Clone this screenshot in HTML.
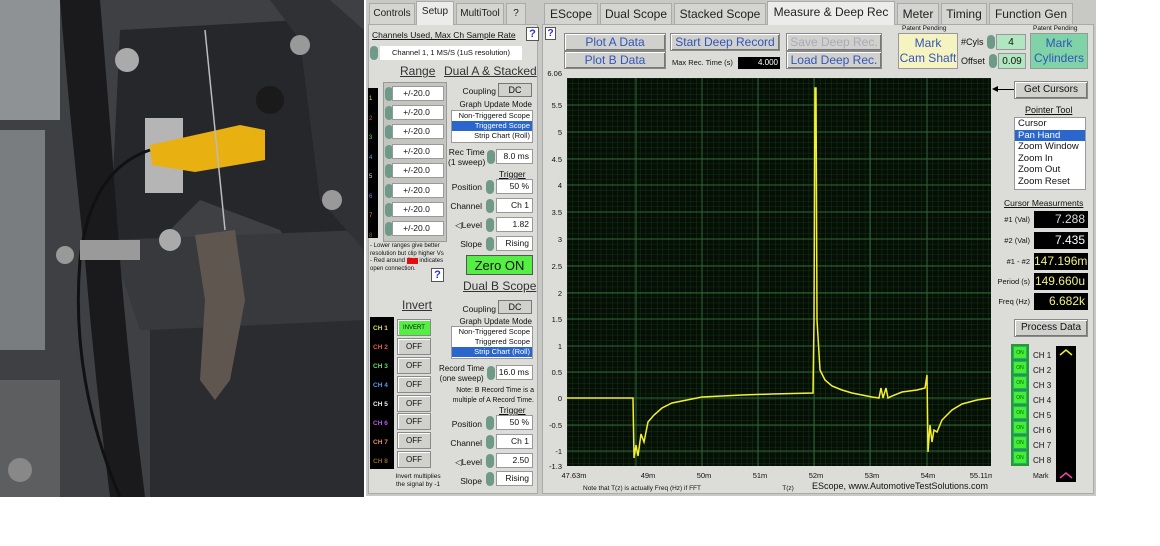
<!DOCTYPE html>
<html><head><meta charset="utf-8"><style>
*{margin:0;padding:0;box-sizing:border-box}
body{width:1160px;height:546px;background:#fff;position:relative;overflow:hidden;font-family:"Liberation Sans",sans-serif;font-size:9px;color:#111}
.a{position:absolute;white-space:nowrap}
.tab{position:absolute;top:3px;height:21px;background:#d4d4d0;border:1px solid #aaa;border-bottom:none;font-size:12px;color:#222;text-align:center;line-height:20px}
.tab.s{background:#ececea;top:1px;height:24px}
.box{position:absolute;background:#fff;border:1px solid #999;text-align:right;padding-right:3px;font-size:8.5px;line-height:13px;height:15px;white-space:nowrap;overflow:hidden}
.sp{position:absolute;width:8px;height:14px;border-radius:4px;background:#6f9a8a}
.btn{position:absolute;background:#d0d0cc;border:1px solid #888;box-shadow:inset 1px 1px #fff,inset -1px -1px #777;text-align:center;color:#3355bb;font-size:12px;white-space:nowrap}
.r{text-align:right}
.u{text-decoration:underline}
.meas{position:absolute;left:1034px;width:54px;height:17px;background:#000;color:#ddd;font-size:12px;text-align:right;padding-right:3px;line-height:17px;white-space:nowrap;overflow:hidden}
.on{position:absolute;left:1013px;width:14px;height:13px;background:#44ee33;border:1px solid #2a8;font-size:5px;text-align:center;line-height:12px;color:#060}
.off{position:absolute;left:397px;width:34px;height:17px;background:#d0d0cc;border:1px solid #888;box-shadow:inset 1px 1px #fff;text-align:center;font-size:8px;line-height:16px}
</style></head><body>
<!-- photo -->
<svg class="a" style="left:0;top:0" width="364" height="497">
<rect width="364" height="497" fill="#3e4044"/>
<rect x="0" y="0" width="60" height="120" fill="#8f9294"/>
<rect x="0" y="130" width="45" height="220" fill="#7a7d80"/>
<rect x="0" y="380" width="60" height="117" fill="#5c5e60"/>
<path d="M120 30 L300 20 L364 60 L364 300 L300 260 L280 230 L200 200 L140 260 L110 240 Z" fill="#26272a"/>
<path d="M110 240 L364 230 L364 330 L140 330Z" fill="#38393d"/>
<path d="M150 330 L364 320 L364 497 L150 497Z" fill="#2b2c2f"/>
<path d="M60 0 Q70 120 85 260 Q95 380 110 497 L145 497 Q130 380 120 260 Q110 120 100 0Z" fill="#1a1a1c"/>
<path d="M270 0 L330 0 L364 30 L364 250 L320 200 L300 40Z" fill="#303134"/>
<rect x="145" y="118" width="38" height="75" fill="#b5b5b5"/>
<path d="M150 145 L240 125 L265 130 L265 160 L195 172 L152 165Z" fill="#e8b010"/>
<path d="M150 150 Q90 170 80 260 Q70 380 120 497" stroke="#111" stroke-width="3" fill="none"/>
<path d="M205 30 L225 230" stroke="#bbb" stroke-width="1.5"/>
<path d="M195 235 L235 230 L245 300 L230 380 L215 400 L200 380 L205 300Z" fill="#5f5650"/>
<circle cx="127" cy="60" r="12" fill="#aaa"/><circle cx="300" cy="45" r="10" fill="#999"/>
<circle cx="170" cy="240" r="11" fill="#aaa"/><circle cx="332" cy="200" r="10" fill="#999"/>
<circle cx="65" cy="255" r="9" fill="#999"/><circle cx="20" cy="470" r="12" fill="#888"/>
<rect x="80" y="240" width="60" height="20" fill="#9a9a9a"/>
<circle cx="270" cy="100" r="14" fill="#1a1a1a"/>
</svg>
<!-- app bg -->
<div class="a" style="left:366px;top:0;width:730px;height:496px;background:#c8c8c4"></div>
<div class="a" style="left:368px;top:24px;width:170px;height:470px;background:#dcdcd8;border:1px solid #aaa"></div>
<div class="a" style="left:542px;top:24px;width:552px;height:470px;background:#dcdcd8;border:1px solid #aaa"></div>
<div class="tab" style="left:369px;width:46px;font-size:10px">Controls</div>
<div class="tab s" style="left:416px;width:38px;font-size:10px">Setup</div>
<div class="tab" style="left:456px;width:48px;font-size:10px">MultiTool</div>
<div class="tab" style="left:506px;width:20px;font-size:10px">?</div>
<div class="tab" style="left:544px;width:54px">EScope</div>
<div class="tab" style="left:600px;width:72px">Dual Scope</div>
<div class="tab" style="left:674px;width:92px">Stacked Scope</div>
<div class="tab s" style="left:767px;width:128px">Measure &amp; Deep Rec</div>
<div class="tab" style="left:897px;width:42px">Meter</div>
<div class="tab" style="left:941px;width:46px">Timing</div>
<div class="tab" style="left:989px;width:84px">Function Gen</div>
<!-- setup panel -->
<div class="a u" style="left:372px;top:30px;font-size:8.5px">Channels Used, Max Ch Sample Rate</div>
<div class="a" style="left:526px;top:27px;width:13px;height:14px;background:#fff;border:1px solid #555;color:#23c;font-weight:bold;text-align:center;font-size:11px">?</div>
<div class="sp" style="left:370px;top:46px"></div>
<div class="a" style="left:380px;top:46px;width:142px;height:14px;background:#fff;text-align:center;font-size:7.5px;line-height:14px">Channel 1, 1 MS/S (1uS resolution)</div>
<div class="a u" style="left:400px;top:64px;font-size:12px;color:#333">Range</div>
<div class="a u" style="left:444px;top:64px;font-size:12px;color:#333">Dual A &amp; Stacked</div>
<div class="a" style="left:368px;top:88px;width:10px;height:150px;background:#000"></div>
<div class="a" style="left:383px;top:82px;width:64px;height:160px;background:#c4c4c0;border:1px solid #999"></div>
<div class="a" style="left:369px;top:90px;font-size:6px;line-height:19.5px;color:#ddd"><span style="color:#dd5">1</span><br><span style="color:#d55">2</span><br><span style="color:#5d5">3</span><br><span style="color:#59f">4</span><br>5<br><span style="color:#a6f">6</span><br><span style="color:#d84">7</span><br><span style="color:#863">8</span></div>
<div class="a r" style="left:440px;top:86px;width:56px;font-size:8.5px">Coupling</div>
<div class="a" style="left:498px;top:83px;width:34px;height:14px;background:#d0d0cc;border:1px solid #777;text-align:center;font-size:9px;line-height:13px">DC</div>
<div class="a r" style="left:440px;top:100px;width:92px;font-size:8px">Graph Update Mode</div>
<div class="a" style="left:451px;top:110px;width:82px;height:33px;background:#fff;border:1px solid #999;font-size:7.5px;line-height:10px;text-align:right">
<div style="padding-right:2px">Non-Triggered Scope</div><div style="background:#2a66cc;color:#fff;padding-right:2px">Triggered Scope</div><div style="padding-right:2px">Strip Chart (Roll)</div></div>
<div class="a" style="left:448px;top:147px;font-size:8.5px;text-align:center;line-height:10px">Rec Time<br>(1 sweep)</div>
<div class="sp" style="left:487px;top:150px"></div>
<div class="box" style="left:496px;top:149px;width:37px">8.0 ms</div>
<div class="a u" style="left:499px;top:169px;font-size:8.5px">Trigger</div>
<div class="a r" style="left:440px;top:182px;width:42px;font-size:8.5px">Position</div><div class="sp" style="left:486px;top:180px"></div><div class="box" style="left:496px;top:179px;width:37px">50 %</div>
<div class="a r" style="left:440px;top:201px;width:42px;font-size:8.5px">Channel</div><div class="sp" style="left:486px;top:199px"></div><div class="box" style="left:496px;top:198px;width:37px">Ch 1</div>
<div class="a r" style="left:440px;top:220px;width:42px;font-size:8.5px">◁Level</div><div class="sp" style="left:486px;top:218px"></div><div class="box" style="left:496px;top:217px;width:37px">1.82</div>
<div class="a r" style="left:440px;top:239px;width:42px;font-size:8.5px">Slope</div><div class="sp" style="left:486px;top:237px"></div><div class="box" style="left:496px;top:236px;width:37px">Rising</div>
<div class="a" style="left:370px;top:243px;font-size:6px;line-height:7.5px;width:82px;white-space:normal">- Lower ranges give better resolution but clip higher Vs<br>- Red around <span style="background:#d11;color:#d11">Ch#</span> indicates open connection.</div>
<div class="a" style="left:431px;top:268px;width:13px;height:14px;background:#fff;border:1px solid #555;color:#23c;font-weight:bold;text-align:center;font-size:11px">?</div>
<div class="a" style="left:466px;top:255px;width:67px;height:20px;background:#55ee44;border:1px solid #555;text-align:center;font-size:13px;line-height:19px">Zero ON</div>
<div class="a u" style="left:463px;top:279px;font-size:12px;color:#333">Dual B Scope</div>
<div class="a u" style="left:402px;top:298px;font-size:12px;color:#333">Invert</div>
<div class="a" style="left:370px;top:317px;width:24px;height:152px;background:#000;font-size:6.5px;font-weight:bold;line-height:19px;padding:2px 0 0 3px"><span style="color:#dd5">CH 1</span><br><span style="color:#e55">CH 2</span><br><span style="color:#6d6">CH 3</span><br><span style="color:#59e">CH 4</span><br><span style="color:#eee">CH 5</span><br><span style="color:#b5e">CH 6</span><br><span style="color:#e85">CH 7</span><br><span style="color:#862">CH 8</span></div>
<div class="off" style="top:319px;background:#55ee44;font-size:6px">INVERT</div>
<div class="off" style="top:338px">OFF</div><div class="off" style="top:357px">OFF</div><div class="off" style="top:376px">OFF</div><div class="off" style="top:395px">OFF</div><div class="off" style="top:413px">OFF</div><div class="off" style="top:432px">OFF</div><div class="off" style="top:451px">OFF</div>
<div class="a" style="left:387px;top:473px;font-size:6.5px;text-align:center;line-height:8px;width:62px">Invert multiplies<br>the signal by -1</div>
<div class="a r" style="left:440px;top:304px;width:56px;font-size:8.5px">Coupling</div>
<div class="a" style="left:498px;top:300px;width:34px;height:14px;background:#d0d0cc;border:1px solid #777;text-align:center;line-height:13px">DC</div>
<div class="a r" style="left:440px;top:317px;width:92px;font-size:8px">Graph Update Mode</div>
<div class="a" style="left:451px;top:326px;width:82px;height:33px;background:#fff;border:1px solid #999;font-size:7.5px;line-height:10px;text-align:right">
<div style="padding-right:2px">Non-Triggered Scope</div><div style="padding-right:2px">Triggered Scope</div><div style="background:#2a66cc;color:#fff;padding-right:2px">Strip Chart (Roll)</div></div>
<div class="a" style="left:439px;top:364px;font-size:8px;text-align:center;line-height:10px">Record Time<br>(one sweep)</div>
<div class="sp" style="left:487px;top:366px"></div>
<div class="box" style="left:496px;top:365px;width:37px">16.0 ms</div>
<div class="a" style="left:442px;top:386px;font-size:7px;text-align:right;width:92px;line-height:10px;white-space:normal">Note: B Record Time is a multiple of A Record Time.</div>
<div class="a u" style="left:499px;top:405px;font-size:8.5px">Trigger</div>
<div class="a r" style="left:440px;top:419px;width:42px;font-size:8.5px">Position</div><div class="sp" style="left:486px;top:416px"></div><div class="box" style="left:496px;top:415px;width:37px">50 %</div>
<div class="a r" style="left:440px;top:438px;width:42px;font-size:8.5px">Channel</div><div class="sp" style="left:486px;top:435px"></div><div class="box" style="left:496px;top:434px;width:37px">Ch 1</div>
<div class="a r" style="left:440px;top:457px;width:42px;font-size:8.5px">◁Level</div><div class="sp" style="left:486px;top:454px"></div><div class="box" style="left:496px;top:453px;width:37px">2.50</div>
<div class="a r" style="left:440px;top:476px;width:42px;font-size:8.5px">Slope</div><div class="sp" style="left:486px;top:472px"></div><div class="box" style="left:496px;top:471px;width:37px">Rising</div>
<div class="sp" style="left:385px;top:87px"></div><div class="box" style="left:392px;top:86px;width:52px;text-align:center">+/-20.0</div>
<div class="sp" style="left:385px;top:106px"></div><div class="box" style="left:392px;top:105px;width:52px;text-align:center">+/-20.0</div>
<div class="sp" style="left:385px;top:125px"></div><div class="box" style="left:392px;top:124px;width:52px;text-align:center">+/-20.0</div>
<div class="sp" style="left:385px;top:145px"></div><div class="box" style="left:392px;top:144px;width:52px;text-align:center">+/-20.0</div>
<div class="sp" style="left:385px;top:164px"></div><div class="box" style="left:392px;top:163px;width:52px;text-align:center">+/-20.0</div>
<div class="sp" style="left:385px;top:184px"></div><div class="box" style="left:392px;top:183px;width:52px;text-align:center">+/-20.0</div>
<div class="sp" style="left:385px;top:203px"></div><div class="box" style="left:392px;top:202px;width:52px;text-align:center">+/-20.0</div>
<div class="sp" style="left:385px;top:222px"></div><div class="box" style="left:392px;top:221px;width:52px;text-align:center">+/-20.0</div>
<!-- top controls -->
<div class="a" style="left:545px;top:27px;width:11px;height:13px;background:#fff;border:1px solid #555;color:#23c;font-weight:bold;text-align:center;font-size:10px;line-height:11px">?</div>
<div class="btn" style="left:564px;top:33px;width:102px;height:18px;line-height:16px">Plot A Data</div>
<div class="btn" style="left:564px;top:51px;width:102px;height:18px;line-height:16px">Plot B Data</div>
<div class="btn" style="left:670px;top:33px;width:110px;height:18px;line-height:16px">Start Deep Record</div>
<div class="btn" style="left:786px;top:33px;width:96px;height:18px;line-height:16px;color:#aab">Save Deep Rec.</div>
<div class="btn" style="left:786px;top:51px;width:96px;height:18px;line-height:16px">Load Deep Rec.</div>
<div class="a" style="left:672px;top:58px;font-size:7.5px">Max Rec. Time (s)</div>
<div class="a" style="left:738px;top:57px;width:42px;height:12px;background:#000;color:#fff;font-size:8px;text-align:right;padding-right:2px;line-height:12px">4.000</div>
<div class="a" style="left:902px;top:25px;font-size:6.5px">Patent Pending</div>
<div class="a" style="left:898px;top:33px;width:60px;height:36px;background:#f5f3c0;border:1px solid #999;color:#3355bb;font-size:12px;text-align:center;line-height:15px;padding-top:2px">Mark<br>Cam Shaft</div>
<div class="a" style="left:961px;top:37px;font-size:9px">#Cyls</div>
<div class="sp" style="left:987px;top:35px"></div>
<div class="a" style="left:996px;top:34px;width:30px;height:16px;background:#b0e6c0;border:1px solid #999;text-align:center;font-size:10px;line-height:15px">4</div>
<div class="a" style="left:961px;top:56px;font-size:9px">Offset</div>
<div class="sp" style="left:989px;top:54px"></div>
<div class="a" style="left:998px;top:53px;width:28px;height:16px;background:#b0e6c0;border:1px solid #999;text-align:center;font-size:10px;line-height:15px">0.09</div>
<div class="a" style="left:1033px;top:25px;font-size:6.5px">Patent Pending</div>
<div class="a" style="left:1030px;top:33px;width:58px;height:36px;background:#7fd3a6;border:1px solid #999;color:#3355bb;font-size:12px;text-align:center;line-height:15px;padding-top:2px">Mark<br>Cylinders</div>
<!-- plot -->
<svg class="a" style="left:542px;top:70px" width="450" height="425">
<defs><pattern id="g" x="25" y="8" width="5.62" height="5.35" patternUnits="userSpaceOnUse"><path d="M0 0V6M0 0H6" stroke="#1a3a1a" stroke-width="0.8"/></pattern></defs>
<rect x="25" y="8" width="424" height="388" fill="#050f05"/>
<rect x="25" y="8" width="424" height="388" fill="url(#g)"/>
<g stroke="#2c6a35" stroke-width="1">
<path d="M94 8V396M160 8V396M216 8V396M272 8V396M328 8V396M385 8V396"/>
<path d="M25 35H449M25 62H449M25 89H449M25 115H449M25 142H449M25 169H449M25 196H449M25 223H449M25 249H449M25 276H449M25 302H449M25 328H449M25 355H449M25 381H449"/>
</g>
<g font-size="7.5" text-anchor="end" fill="#111">
<text x="20" y="6">6.06</text><text x="20" y="38">5.5</text><text x="20" y="65">5</text><text x="20" y="92">4.5</text><text x="20" y="118">4</text><text x="20" y="145">3.5</text><text x="20" y="172">3</text><text x="20" y="199">2.5</text><text x="20" y="226">2</text><text x="20" y="252">1.5</text><text x="20" y="279">1</text><text x="20" y="305">0.5</text><text x="20" y="331">0</text><text x="20" y="358">-0.5</text><text x="20" y="384">-1</text><text x="20" y="399">-1.3</text>
</g>
<g font-size="7.5" text-anchor="middle" fill="#111">
<text x="32" y="408">47.63m</text><text x="106" y="408">49m</text><text x="162" y="408">50m</text><text x="218" y="408">51m</text><text x="274" y="408">52m</text><text x="330" y="408">53m</text><text x="386" y="408">54m</text><text x="440" y="408">55.11m</text>
<text x="100" y="420" font-size="6.5">Note that T(z) is actually Freq (Hz) if FFT</text>
<text x="246" y="420" font-size="6.5">T(z)</text>
<text x="358" y="419" font-size="9">EScope, www.AutomotiveTestSolutions.com</text>
</g>
<path fill="none" stroke="#f4f030" stroke-width="1.5" d="M25 328 L91 328 L92 388 L94 375 L96 386 L99 364 L102 372 L106 352 L112 345 L120 338 L130 333 L145 330 L160 327 L180 326 L200 325 L230 324 L271 323 L272 250 L273 18 L274 18 L275 250 L278 300 L283 310 L290 316 L300 320 L310 323 L320 325 L330 327 L337 328 L339 318 L341 328 L344 318 L346 328 L350 326 L360 322 L375 320 L383 318 L385 305 L386 382 L388 355 L390 372 L392 360 L395 362 L400 350 L410 340 L420 334 L435 330 L449 328"/>
</svg>
<!-- right column -->
<div class="a" style="left:996px;top:89px;width:18px;height:1px;background:#000"></div>
<div class="a" style="left:992px;top:86px;width:0;height:0;border:3px solid transparent;border-right:6px solid #000;border-left:none"></div>
<div class="btn" style="left:1014px;top:81px;width:74px;height:18px;line-height:16px;color:#111;font-size:10px">Get Cursors</div>
<div class="a u" style="left:1025px;top:105px;font-size:9px">Pointer Tool</div>
<div class="a" style="left:1014px;top:117px;width:72px;height:73px;background:#fff;border:1px solid #999;font-size:9.5px;line-height:11.5px">
<div style="padding-left:3px">Cursor</div><div style="background:#2a66cc;color:#fff;padding-left:3px">Pan Hand</div><div style="padding-left:3px">Zoom Window</div><div style="padding-left:3px">Zoom In</div><div style="padding-left:3px">Zoom Out</div><div style="padding-left:3px">Zoom Reset</div></div>
<div class="a u" style="left:1004px;top:198px;font-size:8.5px">Cursor Measurments</div>
<div class="a r" style="left:990px;top:215px;width:40px;font-size:7.5px">#1 (Val)</div><div class="meas" style="top:211px">7.288</div>
<div class="a r" style="left:990px;top:236px;width:40px;font-size:7.5px">#2 (Val)</div><div class="meas" style="top:232px;color:#fff">7.435</div>
<div class="a r" style="left:990px;top:257px;width:40px;font-size:7.5px">#1 - #2</div><div class="meas" style="top:253px;color:#f0f080">147.196m</div>
<div class="a r" style="left:982px;top:277px;width:48px;font-size:7.5px">Period (s)</div><div class="meas" style="top:273px;color:#f0f080">149.660u</div>
<div class="a r" style="left:982px;top:297px;width:48px;font-size:7.5px">Freq (Hz)</div><div class="meas" style="top:293px;color:#f0f080">6.682k</div>
<div class="btn" style="left:1014px;top:319px;width:74px;height:18px;line-height:16px;color:#111;font-size:10px">Process Data</div>
<div class="a" style="left:1011px;top:344px;width:18px;height:122px;background:#2a9a30"></div>
<div class="on" style="top:346px">ON</div><div class="on" style="top:361px">ON</div><div class="on" style="top:376px">ON</div><div class="on" style="top:391px">ON</div><div class="on" style="top:406px">ON</div><div class="on" style="top:421px">ON</div><div class="on" style="top:436px">ON</div><div class="on" style="top:451px">ON</div>
<div class="a" style="left:1033px;top:348px;font-size:8px;line-height:15px">CH 1<br>CH 2<br>CH 3<br>CH 4<br>CH 5<br>CH 6<br>CH 7<br>CH 8<br><span style="font-size:7px">Mark</span></div>
<div class="a" style="left:1056px;top:346px;width:20px;height:136px;background:#000"></div>
<svg class="a" style="left:1056px;top:346px" width="20" height="136"><path d="M4 9L10 4L16 9" stroke="#ee3" stroke-width="1.5" fill="none"/><path d="M4 132L10 127L16 132" stroke="#e4a" stroke-width="1.5" fill="none"/></svg>
</body></html>
